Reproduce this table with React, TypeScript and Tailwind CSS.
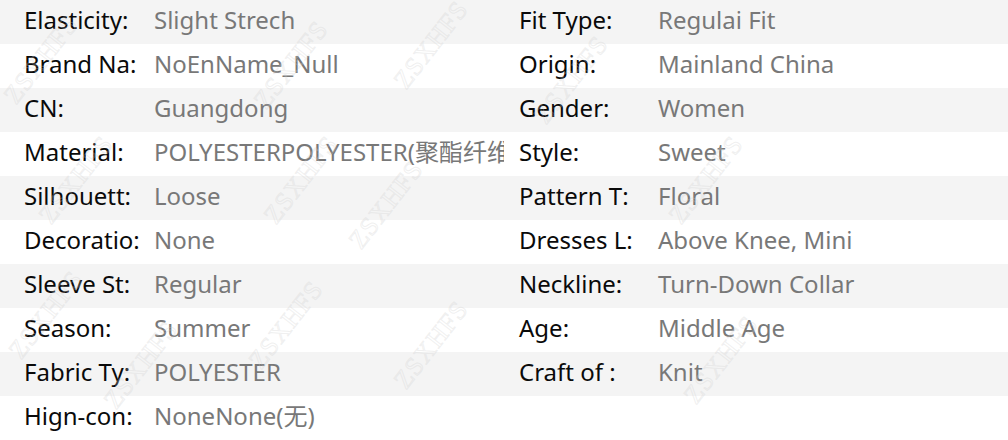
import React from "react";

const rows: [string, string, string, string][] = [
  ["Elasticity:", "Slight Strech", "Fit Type:", "Regulai Fit"],
  ["Brand Na:", "NoEnName_Null", "Origin:", "Mainland China"],
  ["CN:", "Guangdong", "Gender:", "Women"],
  ["Material:", "POLYESTERPOLYESTER(聚酯纤维)", "Style:", "Sweet"],
  ["Silhouett:", "Loose", "Pattern T:", "Floral"],
  ["Decoratio:", "None", "Dresses L:", "Above Knee, Mini"],
  ["Sleeve St:", "Regular", "Neckline:", "Turn-Down Collar"],
  ["Season:", "Summer", "Age:", "Middle Age"],
  ["Fabric Ty:", "POLYESTER", "Craft of :", "Knit"],
  ["Hign-con:", "NoneNone(无)", "", ""],
];

const marks: [number, number][] = [
  [40, 60],
  [290, 65],
  [430, 45],
  [570, 80],
  [75, 180],
  [300, 180],
  [385, 205],
  [705, 180],
  [45, 315],
  [140, 365],
  [285, 325],
  [430, 345],
  [720, 360],
];

export default function App() {
  return (
    <div
      className="relative w-[1008px] h-[440px] overflow-hidden bg-white text-[24px]"
      style={{ fontFamily: '"Noto Sans", "Noto Sans CJK SC", sans-serif' }}
    >
      <div className="flex flex-col">
        {rows.map((r, i) => (
          <div
            key={i}
            className={`flex h-[44px] items-center pb-[5px] ${i % 2 === 0 ? "bg-[#f4f4f4]" : "bg-white"}`}
          >
            <div className="flex w-[504px] items-center pl-[24px]">
              <div className="w-[130px] shrink-0 whitespace-nowrap text-[#0a0a0a]">{r[0]}</div>
              <div className="w-[350px] overflow-hidden whitespace-nowrap text-[#787878]">{r[1]}</div>
            </div>
            <div className="flex w-[504px] items-center pl-[15px]">
              <div className="w-[139px] shrink-0 whitespace-nowrap text-[#0a0a0a]">{r[2]}</div>
              <div className="flex-1 whitespace-nowrap text-[#787878]">{r[3]}</div>
            </div>
          </div>
        ))}
      </div>
      <div aria-hidden="true" className="pointer-events-none absolute inset-0">
        {marks.map(([x, y], i) => (
          <div
            key={i}
            className="absolute -rotate-[52deg] whitespace-nowrap text-[26px] leading-none tracking-[1px] text-transparent [-webkit-text-stroke:1px_rgba(205,205,205,0.3)]"
            style={{ left: x - 50, top: y - 13, fontFamily: '"Liberation Serif", serif' }}
          >
            ZSXHFS
          </div>
        ))}
      </div>
    </div>
  );
}
